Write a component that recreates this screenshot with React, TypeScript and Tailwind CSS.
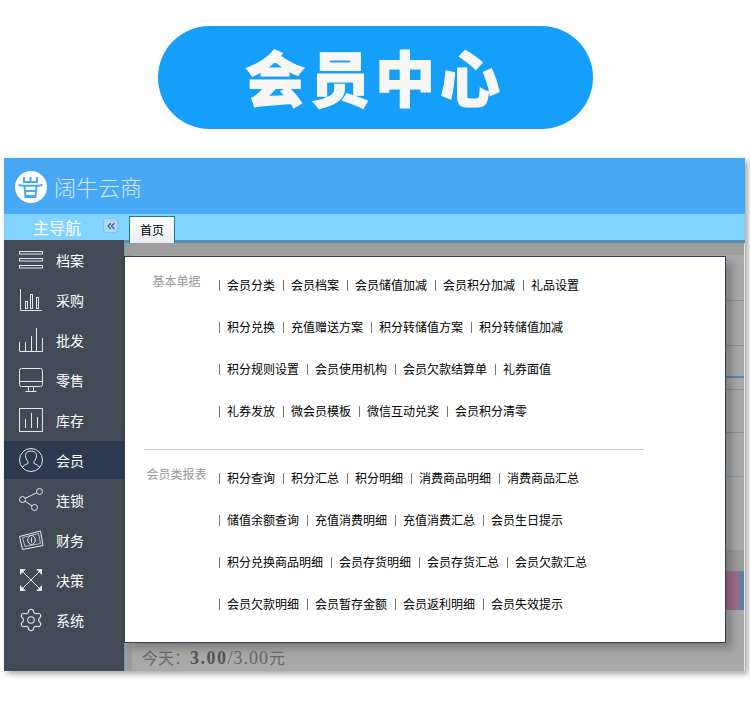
import React from 'react';
import { ChevronsLeft, Settings } from 'lucide-react';

const cjk = { fontFamily: '"Noto Sans CJK SC", sans-serif' };

const IconList = () => (
  <svg width="26" height="26" viewBox="0 0 26 26" fill="none" stroke="currentColor">
    <rect x="1.5" y="4.5" width="23" height="2.5" />
    <rect x="1.5" y="11.5" width="23" height="2.5" />
    <rect x="1.5" y="18.5" width="23" height="2.5" />
  </svg>
);

const IconBars = () => (
  <svg width="26" height="26" viewBox="0 0 26 26" fill="none" stroke="currentColor">
    <path d="M2.5 2v21.5H24" />
    <rect x="7.5" y="14.5" width="2" height="7" />
    <rect x="12.5" y="7.5" width="2" height="14" />
    <rect x="18.5" y="10.5" width="2" height="11" />
  </svg>
);

const IconLines = () => (
  <svg width="26" height="26" viewBox="0 0 26 26" fill="none" stroke="currentColor">
    <path d="M1.5 24V15M1.5 24.5H25M7.5 24v-9M13.5 24V9M18.5 24V1M24.5 24V11" />
  </svg>
);

const IconMonitor = () => (
  <svg width="26" height="26" viewBox="0 0 26 26" fill="none" stroke="currentColor">
    <rect x="1.5" y="1.5" width="23" height="18" rx="2" />
    <path d="M1.5 14.5h23M10.5 20v4M15.5 20v4M7.5 24.5h11" />
  </svg>
);

const IconBoxBars = () => (
  <svg width="26" height="26" viewBox="0 0 26 26" fill="none" stroke="currentColor">
    <rect x="1.5" y="1.5" width="23" height="23" />
    <path d="M7.5 21v-9M13.5 21V6M19.5 21V10" />
  </svg>
);

const IconUser = () => (
  <svg width="26" height="26" viewBox="0 0 26 26" fill="none" stroke="currentColor">
    <circle cx="13" cy="13" r="11.5" />
    <path d="M4.500 20.500c1-2.500 3.500-3 5.500-4v-2c-1.500-1.500-2.500-3.500-2.500-6 0-3 2.500-4.500 5.500-4.500s5.500 1.500 5.500 4.500c0 2.500-1 4.500-2.500 6v2c2 1 4.500 1.500 5.500 4" />
  </svg>
);

const IconShare = () => (
  <svg width="26" height="26" viewBox="0 0 26 26" fill="none" stroke="currentColor">
    <circle cx="21.500" cy="4.500" r="3" />
    <circle cx="4.500" cy="12.500" r="3" />
    <circle cx="16.500" cy="20.500" r="3" />
    <path d="M18.800 5.800 7.200 11.200M7 14.200l7 4.700" />
  </svg>
);

const IconMoney = () => (
  <svg width="26" height="26" viewBox="0 0 26 26" fill="none" stroke="currentColor">
    <path d="M1.500 9.500 22.500 4l2.500 14.500-20.500 4z" />
    <path d="M4.500 10.500 20.500 6.500l2 10-15.500 3z" opacity=".7" />
    <ellipse cx="13.500" cy="13" rx="3.800" ry="4.500" />
    <path d="M13.500 10.500v5" />
  </svg>
);

const IconExpand = () => (
  <svg width="26" height="26" viewBox="0 0 26 26" fill="none" stroke="currentColor">
    <path d="M4 4l18 18M22 4 4 22" />
    <path d="M2 2h6L2 8zM24 2v6l-6-6zM2 24v-6l6 6zM24 24h-6l6-6z" fill="currentColor" stroke="none" />
  </svg>
);

const IconGear = () => <Settings size={26} strokeWidth={1} />;

const Logo = () => (
  <svg width="32" height="32" viewBox="0 0 32 32">
    <circle cx="16" cy="16" r="16" fill="#fff" />
    <path
      d="M9 6v5h13V6M15.500 6v5M3.500 13.500c1.200.8 2.500 1.300 4 1.300h16c1.500 0 2.800-.5 4-1.300M9.500 15l1 11h10l1-11M10 20h11M10.500 25h10"
      fill="none"
      stroke="#47a8f5"
      strokeWidth="2"
    />
  </svg>
);

const navItems = [
  { label: '档案', icon: <IconList /> },
  { label: '采购', icon: <IconBars /> },
  { label: '批发', icon: <IconLines /> },
  { label: '零售', icon: <IconMonitor /> },
  { label: '库存', icon: <IconBoxBars /> },
  { label: '会员', icon: <IconUser />, active: true },
  { label: '连锁', icon: <IconShare /> },
  { label: '财务', icon: <IconMoney /> },
  { label: '决策', icon: <IconExpand /> },
  { label: '系统', icon: <IconGear /> },
];

const basicRows = [
  ['会员分类', '会员档案', '会员储值加减', '会员积分加减', '礼品设置'],
  ['积分兑换', '充值赠送方案', '积分转储值方案', '积分转储值加减'],
  ['积分规则设置', '会员使用机构', '会员欠款结算单', '礼券面值'],
  ['礼券发放', '微会员模板', '微信互动兑奖', '会员积分清零'],
];

const reportRows = [
  ['积分查询', '积分汇总', '积分明细', '消费商品明细', '消费商品汇总'],
  ['储值余额查询', '充值消费明细', '充值消费汇总', '会员生日提示'],
  ['积分兑换商品明细', '会员存货明细', '会员存货汇总', '会员欠款汇总'],
  ['会员欠款明细', '会员暂存金额', '会员返利明细', '会员失效提示'],
];

const MenuSection: React.FC<{ title: string; rows: string[][] }> = ({ title, rows }) => (
  <div className="flex">
    <div className="ml-[9px] w-[85px] mt-2 text-center text-xs leading-[18px] text-[#999999]">{title}</div>
    <div className="flex flex-col">
      {rows.map((row, i) => (
        <div key={i} className="flex items-center h-[42px]">
          {row.map(item => (
            <div key={item} className="flex items-center">
              <span className="w-px h-[11px] bg-[#777777]"></span>
              <span className="ml-[7px] mr-2 text-xs text-black whitespace-nowrap">{item}</span>
            </div>
          ))}
        </div>
      ))}
    </div>
  </div>
);

const App: React.FC = () => {
  return (
    <div className="w-[750px] h-[703px] bg-white overflow-hidden pt-[26px]" style={cjk}>
      {/* Title */}
      <div className="ml-[158px] w-[435px] h-[103px] rounded-full bg-[#149ffa] flex items-center justify-center">
        <h1 className="text-[60px] leading-none font-black tracking-[5px] text-[#f9f7f6] pr-px mb-1 [-webkit-text-stroke:1px_#f9f7f6]">会员中心</h1>
      </div>

      {/* Window */}
      <div className="ml-[4px] mt-[29px] w-[741px] h-[513px] flex flex-col shadow-[3px_3px_6px_rgba(0,0,0,0.35)]">
        <div className="h-[56px] bg-[#47a8f5] flex items-center pl-[11px] gap-[7px] pt-px">
          <Logo />
          <span className="text-[22px] text-[#d3eaff] font-light">阔牛云商</span>
        </div>

        <div className="h-[26px] bg-[#80d4ff] flex relative">
          <div className="w-[120px] flex items-center">
            <span className="ml-[29px] text-base text-white">主导航</span>
            <button className="ml-[22px] mb-[3px] w-[15px] h-[15px] rounded-[3px] bg-[#b0d8ff] border border-[#8fbce8] flex items-center justify-center text-[#2f62a8]">
              <ChevronsLeft size={12} strokeWidth={2.5} />
            </button>
          </div>
          <div className="absolute left-[125px] top-[2px] z-10 w-[46px] h-[27px] pb-px border border-[#1a7a9e] border-b-0 bg-gradient-to-b from-white to-[#e9eef2] flex items-center justify-center text-xs text-black">首页</div>
        </div>

        <div className="flex-1 flex min-h-0">
          {/* Sidebar */}
          <div className="w-[120px] bg-[#434a56]">
            {navItems.map(item => (
              <div
                key={item.label}
                className={`h-10 flex items-center pl-[14px] gap-3 text-white ${item.active ? 'bg-[#2c3a50] border-y border-[#3d4a5c]' : ''}`}
              >
                <span className="text-[#e8e8e8] flex">{item.icon}</span>
                <span className="text-sm">{item.label}</span>
              </div>
            ))}
          </div>

          {/* Dimmed page behind the menu */}
          <div className="flex-1 relative flex flex-col bg-[#a9a9a9] border-l border-[#5a9bc0]">
            <div className="h-[3px] bg-[#5a8fae]"></div>
            <div className="h-[12px] bg-[#9e9e9e]"></div>
            <div className="h-[46px] border-b border-[#8f8f8f]"></div>
            <div className="h-[45px] border-b border-[#8f8f8f]"></div>
            <div className="h-[44px] border-b border-[#8f8f8f]"></div>
            <div className="h-[43px] border-b border-[#8f8f8f]"></div>
            <div className="h-[44px] border-b border-[#8b9bb0]"></div>
            <div className="h-[73px]"></div>
            <div className="h-[21px] bg-[#9c9c9c]"></div>
            <div className="h-[39px] flex justify-end">
              <div className="w-[14px] bg-[#a06f8b]"></div>
              <div className="w-[6px] bg-[#5f7fa5]"></div>
            </div>
            <div className="flex-1 flex items-end pl-[17px] text-[#666666]" style={{ fontFamily: '"Liberation Serif", "Noto Sans CJK SC", serif' }}>
              <div className="relative z-10 leading-[20px] whitespace-nowrap">
                <span className="text-base">今天：</span>
                <b className="text-[18px] tracking-[1.5px] text-[#555555]">3.00</b>
                <span className="text-[18px] tracking-[1px]">/3.00</span>
                <span className="text-base">元</span>
              </div>
            </div>

            <div className="absolute left-0 top-[3px] bottom-0 w-[7px] bg-[#9c9c9c]"></div>
            <div className="absolute right-0 top-[136px] w-[20px] h-[2px] bg-[#5f87ac]"></div>
            <div className="absolute right-0 top-[3px] bottom-0 w-px bg-[#e4e4e4]"></div>

            {/* Menu popup */}
            <div className="absolute left-[-1px] top-[16px] w-[602px] h-[387px] bg-white border border-[#2c3e50] pt-[7px] shadow-[6px_6px_8px_rgba(0,0,0,0.25)]">
              <MenuSection title="基本单据" rows={basicRows} />
              <div className="ml-[19px] w-[500px] h-px bg-[#cccccc] mt-[17px] mb-[7px]"></div>
              <MenuSection title="会员类报表" rows={reportRows} />
            </div>
          </div>
        </div>
      </div>
    </div>
  );
};

export default App;
